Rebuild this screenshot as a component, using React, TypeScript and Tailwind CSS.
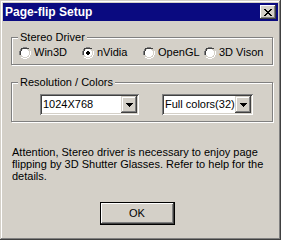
import React from 'react';

const font = { fontFamily: '"Liberation Sans", Arial, sans-serif' };

function Radio({ label, checked, className }: { label: string; checked?: boolean; className?: string }) {
  return (
    <div className={`flex items-center gap-[3px] ${className ?? ''}`}>
      <svg width="12" height="12" viewBox="0 0 12 12" className="shrink-0">
        {/* classic sunken radio */}
        <path d="M4 0h4v1h2v1h-0v0H8V1H4v1H2v2H1v4H0V4h1V2h1V1h2z" fill="#808080" />
        <path d="M0 4h1v4H0zM1 2h1v2H1zM2 1h2v1H2zM4 0h4v1H4zM8 1h2v1H8z" fill="#808080" />
        <path d="M4 1h4v1h2v2h1v4h-1V4H9V2H4v1H2v2H2V8H1V4h1V2h2z" fill="#404040" opacity="0" />
        <path d="M1 4h1v4H1zM2 2h1v2H2zM3 2h1v0H3zM2 2h2V1H2zM4 1h4v1H4zM8 1h2v1H8z" fill="#404040" />
        <path d="M11 4h1v4h-1zM10 8h1v2h-1zM8 10h2v1H8zM4 11h4v1H4zM2 10h2v1H2z" fill="#ffffff" />
        <path d="M10 4h1v4h-1zM9 8h1v2H9zM8 9h1v1H8zM4 10h4v1H4zM2 9h2v1H2zM1 8h1v1H1z" fill="#d4d0c8" />
        <path d="M4 2h4v1h1v1h1v4H9v1H8v1H4V9H3V8H2V4h1V3h1z" fill="#ffffff" />
        {checked && <path d="M5 4h2v1h1v2H7v1H5V7H4V5h1z" fill="#000000" />}
      </svg>
      <span className="text-[11px] leading-[13px] text-black">{label}</span>
    </div>
  );
}

function Combo({ value, className }: { value: string; className?: string }) {
  return (
    <div
      className={`h-[21px] bg-white flex items-stretch p-[2px] shadow-[inset_1px_1px_0_#808080,inset_-1px_-1px_0_#ffffff,inset_2px_2px_0_#404040,inset_-2px_-2px_0_#d4d0c8] ${className ?? ''}`}
    >
      <div className="flex-1 flex items-center pl-[1px] text-[11px] leading-[13px] text-black">{value}</div>
      <div className="w-[16px] bg-[#d4d0c8] flex items-center justify-center shadow-[inset_-1px_-1px_0_#404040,inset_1px_1px_0_#d4d0c8,inset_-2px_-2px_0_#808080,inset_2px_2px_0_#ffffff]">
        <svg width="7" height="4" viewBox="0 0 7 4">
          <path d="M0 0h7v1H6v1H5v1H4v1H3V3H2V2H1V1H0z" fill="#000" />
        </svg>
      </div>
    </div>
  );
}

export default function App() {
  return (
    <div
      className="w-[281px] h-[240px] bg-[#d4d0c8] p-[3px] flex flex-col shadow-[inset_-1px_-1px_0_#404040,inset_1px_1px_0_#d4d0c8,inset_-2px_-2px_0_#808080,inset_2px_2px_0_#ffffff]"
      style={font}
    >
      {/* Title bar */}
      <div className="h-[18px] bg-[#0a0a80] flex items-center justify-between pl-[2px] pr-[2px]">
        <span className="text-white font-bold text-[12px] leading-[14px]">Page-flip Setup</span>
        <button className="w-[16px] h-[14px] bg-[#d4d0c8] flex items-center justify-center shadow-[inset_-1px_-1px_0_#404040,inset_1px_1px_0_#ffffff,inset_-2px_-2px_0_#808080,inset_2px_2px_0_#d4d0c8]">
          <svg width="8" height="7" viewBox="0 0 8 7">
            <path d="M0 0h2v1h1v1h2V1h1V0h2v1H7v1H6v1H5v1h1v1h1v1h1v1H6V6H5V5H3v1H2v1H0V6h1V5h1V4h1V3H2V2H1V1H0z" fill="#000" />
          </svg>
        </button>
      </div>

      <div className="flex-1 flex flex-col px-[8px]">
        {/* Stereo Driver */}
        <fieldset className="mt-[10px] mr-[-3px] border border-[#808080] shadow-[inset_1px_1px_0_#ffffff,1px_1px_0_#ffffff] pb-[5px]">
          <legend className="ml-[6px] px-[2px] text-[11px] leading-[13px] text-black bg-[#d4d0c8]">Stereo Driver</legend>
          <div className="flex pl-[7px] pt-[2px]">
            <Radio label="Win3D" className="w-[63px]" />
            <Radio label="nVidia" checked className="w-[61px]" />
            <Radio label="OpenGL" className="w-[61px]" />
            <Radio label="3D Vison" />
          </div>
        </fieldset>

        {/* Resolution / Colors */}
        <fieldset className="mt-[11px] mr-[-3px] border border-[#808080] shadow-[inset_1px_1px_0_#ffffff,1px_1px_0_#ffffff] pb-[6px]">
          <legend className="ml-[6px] px-[2px] text-[11px] leading-[13px] text-black bg-[#d4d0c8]">Resolution / Colors</legend>
          <div className="flex pl-[28px] pt-[5px] gap-[23px]">
            <Combo value="1024X768" className="w-[99px]" />
            <Combo value="Full colors(32)" className="w-[91px]" />
          </div>
        </fieldset>

        <p className="mt-[24px] pl-[1px] text-[11px] leading-[12px] text-black">
          Attention, Stereo driver is necessary to enjoy page flipping by 3D Shutter Glasses. Refer to help for the details.
        </p>

        <div className="flex justify-center mt-[20px] pr-[7px]">
          <button className="w-[75px] h-[23px] bg-[#d4d0c8] text-[11px] text-black border border-black shadow-[inset_-1px_-1px_0_#404040,inset_1px_1px_0_#ffffff,inset_-2px_-2px_0_#808080]">
            OK
          </button>
        </div>
      </div>
    </div>
  );
}
